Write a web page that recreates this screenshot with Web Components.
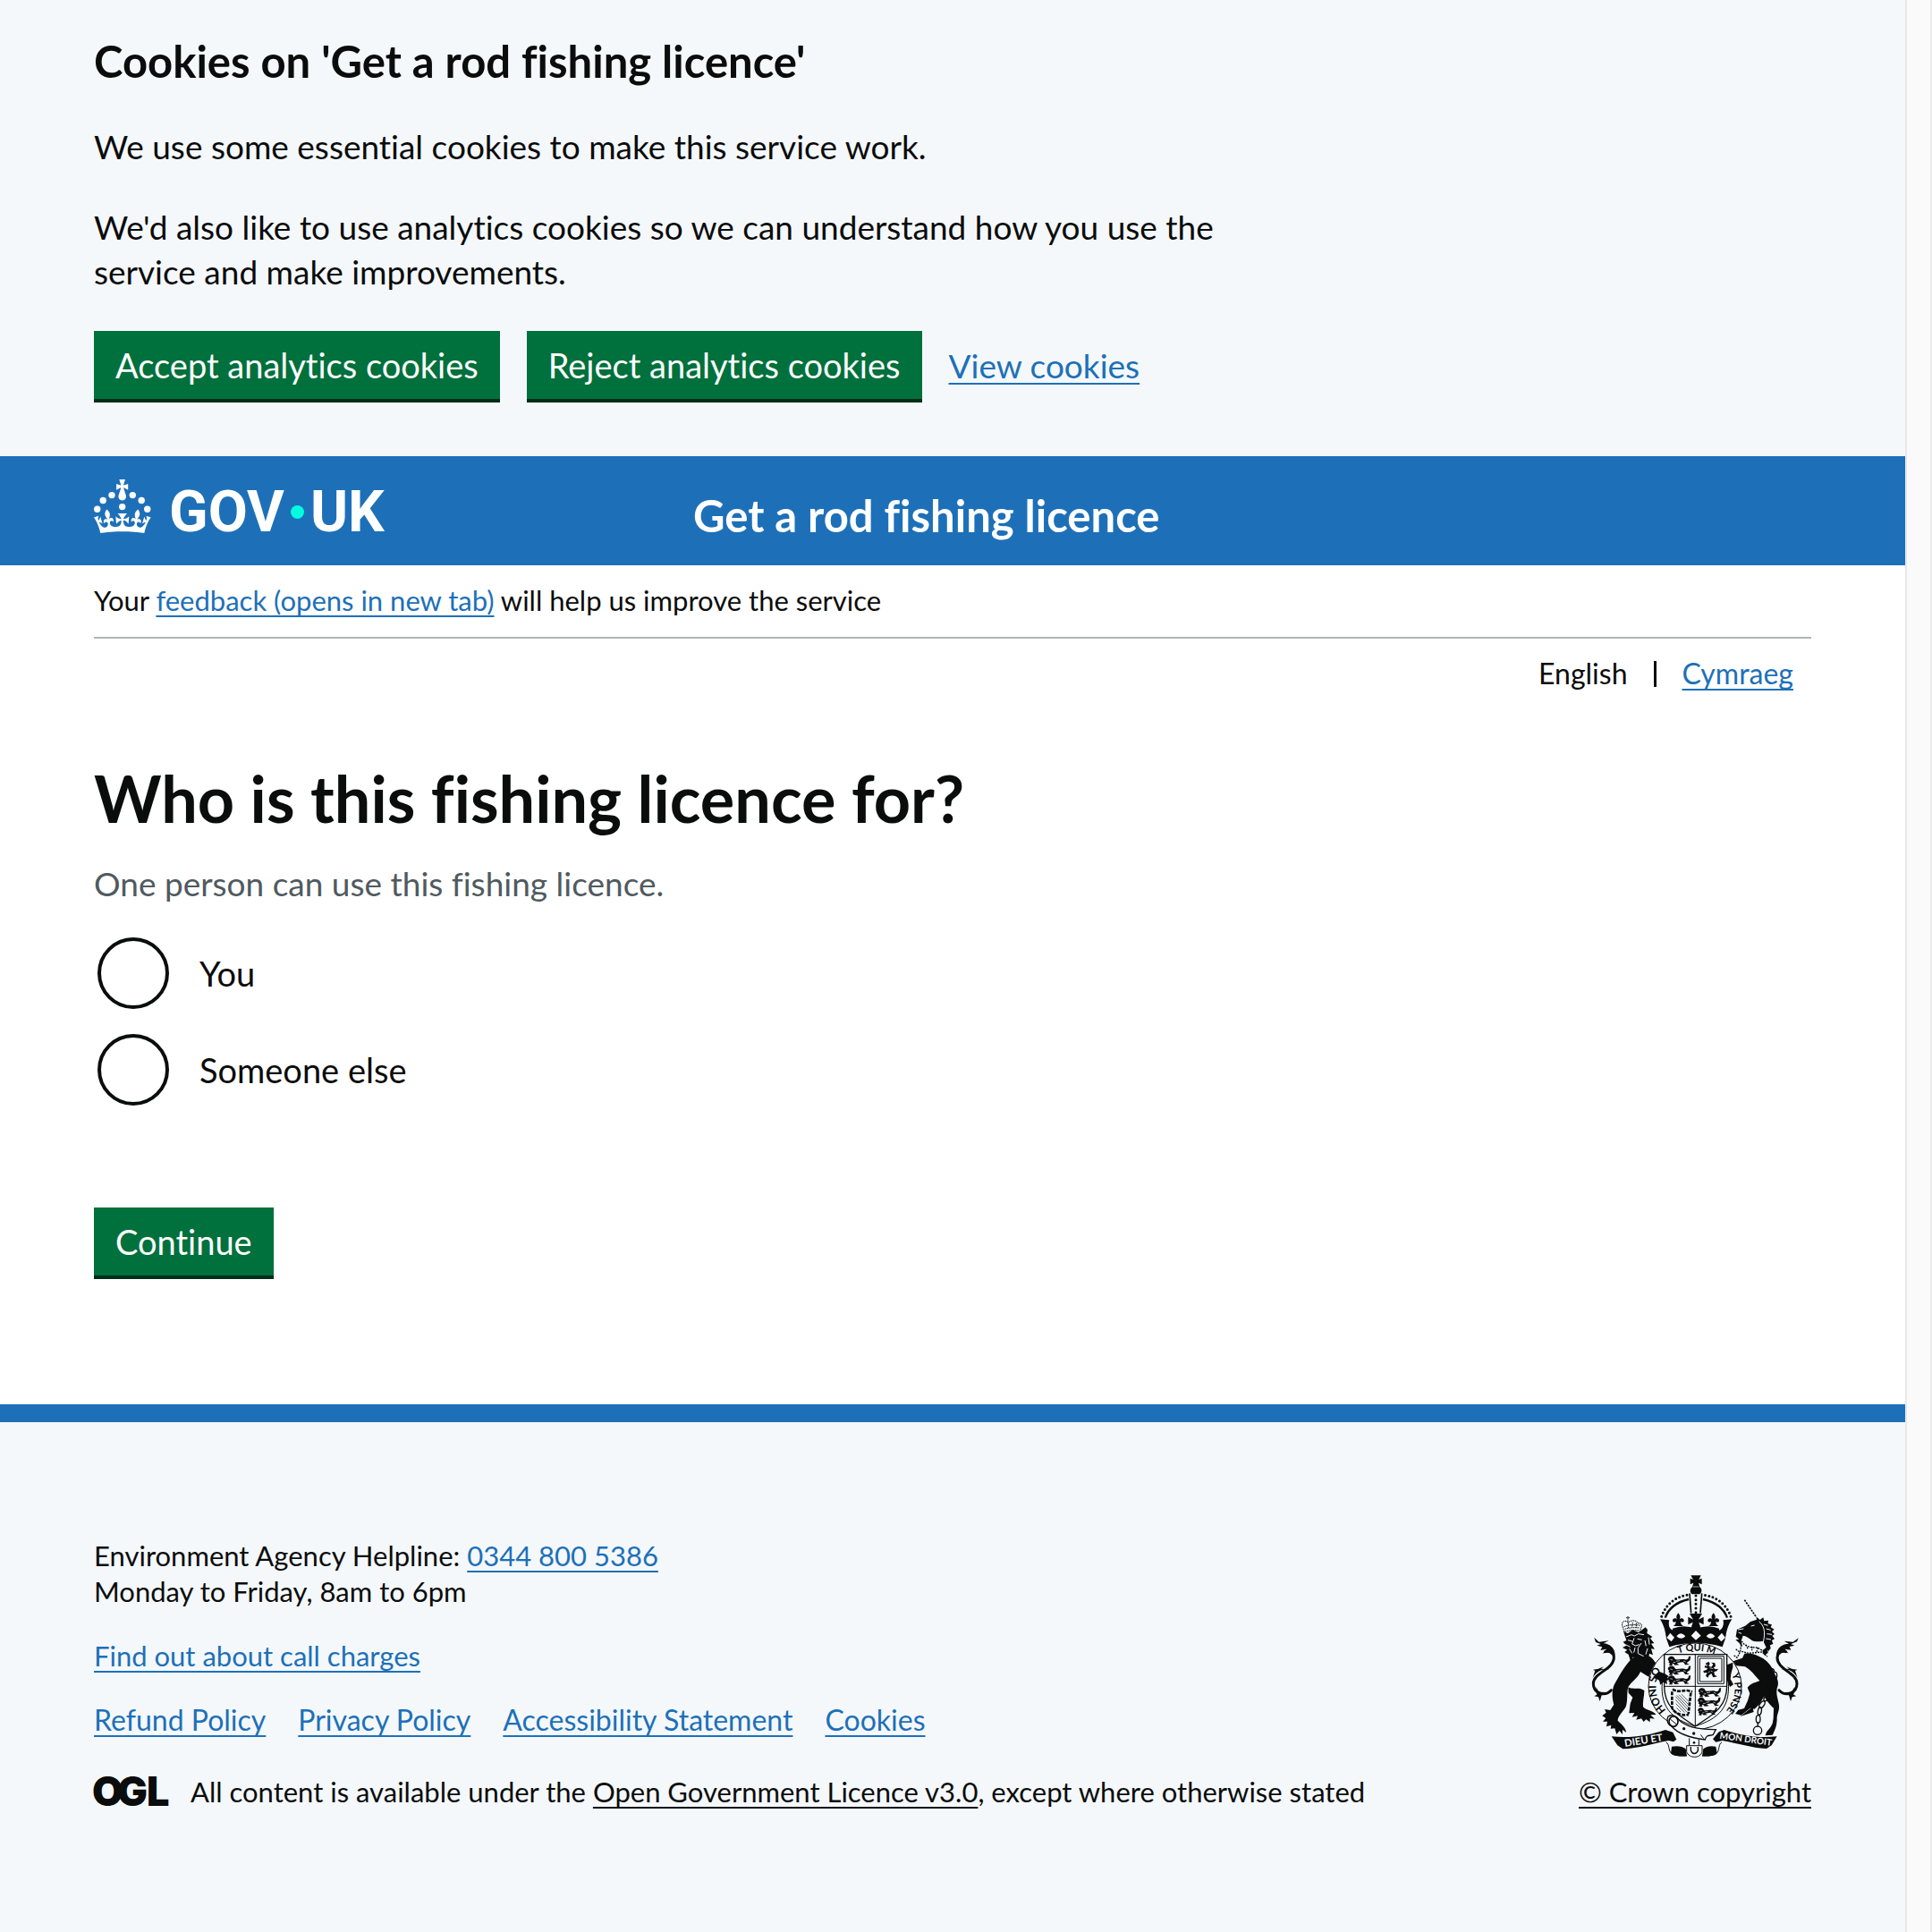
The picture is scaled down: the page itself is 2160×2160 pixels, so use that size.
<!DOCTYPE html>
<html lang="en">
<head>
<meta charset="utf-8">
<meta name="viewport" content="width=device-width, initial-scale=1">
<title>Who is this fishing licence for? - Get a rod fishing licence - GOV.UK</title>
<style>
html{background:#fff}
body{
  --ink:#0b0c0c;--blue:#1d70b8;--pale:#f4f8fb;--green:#00703c;--green-edge:#002d18;--grey:#b1b4b6;--hint:#505a5f;
  --gutter:105px;
  margin:0;color:var(--ink);
  font:37px/50px Lato,Roboto,"Liberation Sans",sans-serif;
  font-variant-ligatures:none;
}
</style>
</head>
<body>
<licence-page>
  <cookie-banner slot="banner">
    <span slot="heading">Cookies on 'Get a rod fishing licence'</span>
    <p>We use some essential cookies to make this service work.</p>
    <p>We'd also like to use analytics cookies so we can understand how you use the service and make improvements.</p>
    <action-button slot="actions">Accept analytics cookies</action-button>
    <action-button slot="actions">Reject analytics cookies</action-button>
    <text-link slot="actions">View cookies</text-link>
  </cookie-banner>
  <service-header slot="header">Get a rod fishing licence</service-header>
  <feedback-bar slot="phase"></feedback-bar>
  <language-switch slot="language"></language-switch>
  <licence-question slot="question"></licence-question>
  <service-footer slot="footer"></service-footer>
</licence-page>

<script>
const define = (name, html) => customElements.define(name, class extends HTMLElement {
  constructor() {
    super();
    this.attachShadow({ mode: 'open' }).innerHTML =
      '<style>:host{display:block}*{box-sizing:border-box}h1,h2,p,ul{margin:0;padding:0;font-weight:inherit}</style>' + html;
  }
});

define('text-link', `
<style>
:host{display:inline}
a{color:var(--link-colour,var(--blue));text-decoration:underline;text-decoration-thickness:2px;text-underline-offset:5px;text-decoration-skip-ink:none}
</style>
<a href="#"><slot></slot></a>`);

define('action-button', `
<style>
button{display:block;border:0;border-bottom:4px solid var(--green-edge);border-radius:0;margin:0;padding:13px 24px;
  background:var(--green);color:#fff;font:inherit;font-size:38px;line-height:50px;font-variant-ligatures:none;cursor:pointer}
</style>
<button type="button"><slot></slot></button>`);

define('licence-page', `
<style>
:host{display:grid;grid-template-columns:minmax(0,1fr) 30px;min-height:100vh}
.page{display:flex;flex-direction:column}
main{padding:0 var(--gutter)}
.rail{background:#fafafa;border-left:2px solid #e8e8e8;border-right:2px solid #ededed}
::slotted([slot=footer]){flex:1}
</style>
<div class="page">
  <slot name="banner"></slot>
  <slot name="header"></slot>
  <main><slot name="phase"></slot><slot name="language"></slot><slot name="question"></slot></main>
  <slot name="footer"></slot>
</div>
<div class="rail"></div>`);

define('cookie-banner', `
<style>
:host{background:var(--pale);padding:38px var(--gutter) 60px}
h2{font-size:49px;line-height:60px;font-weight:700}
.copy{display:flex;flex-direction:column;gap:40px;max-width:1280px;margin:41px 0}
::slotted(p){margin:0}
.actions{display:flex;flex-wrap:wrap;align-items:baseline;gap:30px}
</style>
<h2><slot name="heading"></slot></h2>
<div class="copy"><slot></slot></div>
<div class="actions"><slot name="actions"></slot></div>`);

define('gov-logo', `
<style>
:host{display:flex;align-items:flex-start;gap:19px;color:#fff;font:700 64px/74px Roboto,sans-serif}
svg{display:block;width:65px;height:60px;fill:currentColor}
.word{display:flex;gap:7px}
i{width:15px;height:15px;border-radius:50%;background:#00ffe0;margin-top:29px}
</style>
<svg viewBox="0 0 65 60" aria-hidden="true">
<circle cx="20" cy="17.6" r="3.7"/><circle cx="10.2" cy="23.5" r="3.7"/><circle cx="3.7" cy="33.2" r="3.7"/><circle cx="31.7" cy="30.6" r="3.7"/><circle cx="43.3" cy="17.6" r="3.7"/><circle cx="53.2" cy="23.5" r="3.7"/><circle cx="59.7" cy="33.2" r="3.7"/>
<path d="M33.1,9.8c.2-.1.3-.3.5-.5l4.6,2.4v-6.8l-4.6,1.5c-.1-.2-.3-.3-.5-.5l1.9-5.9h-6.7l1.9,5.9c-.2.1-.3.3-.5.5l-4.6-1.5v6.8l4.6-2.4c.1.2.3.3.5.5l-2.6,8c-.9,2.8,1.2,5.7,4.1,5.7h0c3,0,5.1-2.9,4.1-5.7l-2.6-8ZM37,37.9s-3.4,3.8-4.1,6.1c2.2,0,4.2-.5,6.4-2.8l-.7,8.5c-2-2.8-4.4-4.1-5.7-3.8.1,3.1.5,6.7,5.8,7.2,3.7.3,6.7-1.5,7-3.8.4-2.6-2-4.3-3.7-1.6-1.4-4.5,2.4-6.1,4.9-3.2-1.9-4.5-1.8-7.7,2.4-10.9,3,4,2.6,7.3-1.2,11.1,2.4-1.3,6.2,0,4,4.6-1.2-2.8-3.7-2.2-4.2.2-.3,1.7.7,3.7,3,4.2,1.9.3,4.7-.9,7-5.9-1.3,0-2.4.7-3.9,1.7l2.4-8c.6,2.3,1.4,3.7,2.2,4.5.6-1.6.5-2.8,0-5.3l5,1.8c-2.6,3.6-5.2,8.7-7.3,17.5-7.4-1.1-15.7-1.7-24.5-1.7h0c-8.8,0-17.1.6-24.5,1.7-2.1-8.9-4.7-13.9-7.3-17.5l5-1.8c-.5,2.5-.6,3.7,0,5.3.8-.8,1.6-2.3,2.2-4.5l2.4,8c-1.5-1-2.6-1.7-3.9-1.7,2.3,5,5.2,6.2,7,5.9,2.3-.4,3.3-2.4,3-4.2-.5-2.4-3-3.1-4.2-.2-2.2-4.6,1.6-6,4-4.6-3.7-3.7-4.2-7.1-1.2-11.1,4.2,3.2,4.3,6.4,2.4,10.9,2.5-2.8,6.3-1.3,4.9,3.2-1.8-2.7-4.1-1-3.7,1.6.3,2.3,3.3,4.1,7,3.8,5.4-.5,5.7-4.2,5.8-7.2-1.3-.2-3.7,1-5.7,3.8l-.7-8.5c2.2,2.3,4.2,2.7,6.4,2.8-.7-2.3-4.1-6.1-4.1-6.1h10.6,0Z"/>
</svg>
<span class="word"><span>GOV</span><i></i><span>UK</span></span>`);

define('service-header', `
<style>
:host{background:var(--blue);padding:26px var(--gutter) 22px}
header{display:grid;grid-template-columns:calc(33.333% + 30px) 1fr;align-items:start}
.title{padding-top:10px;font-size:49px;line-height:60px;font-weight:700;color:#fff}
</style>
<header><gov-logo></gov-logo><div class="title"><slot></slot></div></header>`);

define('feedback-bar', `
<style>
:host{font-size:31px;line-height:40px;padding:19px 0 21px;border-bottom:2px solid var(--grey)}
</style>
<p>Your <text-link>feedback (opens in new tab)</text-link> will help us improve the service</p>`);

define('language-switch', `
<style>
:host{font-size:32px;line-height:40px;padding:19px 20px 0}
nav{display:flex;justify-content:flex-end;align-items:center;gap:29px}
i{width:3px;height:29px;background:var(--ink)}
</style>
<nav><span>English</span><i></i><text-link>Cymraeg</text-link></nav>`);

define('radio-option', `
<style>
label{display:flex;align-items:center;gap:34px;padding:4px;font-size:38px;cursor:pointer}
input{appearance:none;width:80px;height:80px;margin:0;border:4px solid var(--ink);border-radius:50%;background:transparent}
input:checked{background:radial-gradient(var(--ink) 20px,transparent 21px)}
</style>
<label><input type="radio" name="who"><span><slot></slot></span></label>`);

define('licence-question', `
<style>
:host{padding:79px 0 140px}
h1{font-size:72px;line-height:80px;font-weight:700}
.hint{color:var(--hint);margin:31px 0}
.options{display:flex;flex-direction:column;gap:20px;margin-bottom:110px}
form{display:flex;flex-direction:column;align-items:flex-start}
</style>
<form>
<h1>Who is this fishing licence for?</h1>
<p class="hint">One person can use this fishing licence.</p>
<div class="options"><radio-option>You</radio-option><radio-option>Someone else</radio-option></div>
<action-button>Continue</action-button>
</form>`);

define('ogl-logo', `
<style>svg{display:block;width:82px;height:40px;overflow:visible}text{font:900 45px/40px Inter,sans-serif;fill:var(--ink)}</style>
<svg viewBox="0 0 82 40" aria-hidden="true"><text x="-2 26 59" y="36">OGL</text></svg>`);

define('royal-arms', `
<style>
svg{display:block;width:232px;height:204px}
text{font-family:Lato,sans-serif;font-weight:700}
.b{fill:#0b0c0c}.w{fill:#f4f8fb}
.l{fill:none;stroke:#0b0c0c}
.wl{fill:none;stroke:#f4f8fb}
.t{fill:none;stroke:#0b0c0c;stroke-width:9;stroke-linecap:round}
</style>
<svg viewBox="27 29 696 612" stroke-width="3" role="img" aria-label="Royal coat of arms">
<defs>
<g id="lionlet"><path class="b" d="M0 5c4-6 12-7 18-3 3 3 3 7 7 8 10 1 20-3 30 0 8 2 12-1 12-6 0-4 5-6 8-3-3 3 0 8-3 12-3 4-8 5-11 9l9 5-14 1c-3-4-4-9-9-9-8 0-12 3-19 3l8 6-15 1c-2-4-5-5-9-5l2 6-12 0 3-7c-5-2-6-5-2-8-5-2-6-7-3-10z"/><path class="wl" stroke-width="2" d="M6 10l8 2M26 16l12-2M50 15l8 3M16 20l8-1"/></g>
<path id="fleur" d="M0-27c7 8 8 15 4 22 5-7 15-5 15 3 0 6-7 8-11 3 0 8 3 12 9 16h-34c6-4 9-8 9-16-4 5-11 3-11-3 0-8 10-10 15-3-4-7-3-14 4-22z"/>
</defs>
<!-- lion supporter -->
<path class="t" d="M94 415C72 438 34 426 34 393C35 354 106 346 103 302C101 288 90 281 74 286"/>
<path class="b" d="M37 238l16 15 33-4-18 9c22 1 39 17 39 40l-13-3c-6-8-17-8-29-3l13-15-20 4 6-11-18-5 13-5-17-6zM88 345c-20-4-44 6-56 29l8-24-7-4 16-2 20-8-9 7zM43 404l10 17 26 1-17 10-6 20-5-14-14-3 9-5z"/>
<path class="b" d="M162 310C194 287 225 293 240 319C253 334 266 341 277 361L287 368L281 374L287 382L277 383L278 395L268 389L259 396L256 384L216 368L192 353C185 373 164 384 151 404C145 426 151 447 143 471C132 489 116 503 116 517C130 531 144 541 144 557L132 547L132 564L122 551L112 563L106 543L92 544L94 532L78 537L81 520L66 520L76 509L64 501L77 490L72 479L91 482L103 463C96 438 96 413 105 395C120 369 133 341 162 310z"/>
<path class="b" d="M151 405C168 415 189 402 205 416C205 436 199 454 201 471C213 484 231 481 245 497L226 498L240 511L224 509L224 522L211 513L203 521L195 510L178 514L183 501L164 505L172 491L154 492L158 460L166 439L152 424z"/>
<path class="b" d="M135 218l15 6 16-11 20 8 23-17 7 8-2 12 18 12-7 5 13 16-10 2 12 18-12-1 6 21-12-5-4 24-11-12-8 17-7-14-17 10-7-14-8 18-8-26-13-8 9-7-16-8 13-7-11-12 11-5z"/>
<path class="wl" d="M144 236l18-7 10 4 13-7 19 3M150 247l15 4M182 243l15 3M171 240l-7 20 12 6 12-4M142 262l16 8M195 257l-11 17v18l19 9M174 272l-4 17M155 276l9 15M207 248l4 19M219 238l3 24M216 275l-6 20"/>
<path class="l" stroke-dasharray="5 2" d="M138 219l-7-21c-2-16 11-19 20-10c9-9 31-9 32 3c9-3 15 3 13 10l-5 15c-17-4-35-2-53 3zM140 210c16-5 32-6 50-4M137 202c14-7 37-8 54-4M151 188v18M166 188l-2 16M178 189v16M150 185v-18M144 172h13"/>
<!-- unicorn supporter -->
<path class="t" d="M657 415C679 438 717 426 717 393C716 354 650 346 651 305C653 288 665 282 680 286"/>
<path class="b" d="M722 240l-18 13-30-3 16 9c-24 0-43 17-42 41l13-6c8-9 17-8 28-2l-12-15 20 3-5-11 17-4-12-5 20-8zM664 345c21-4 43 6 55 29l-8-24 7-4-17-2-19-8 9 7zM709 404l-10 17-26 1 17 10 6 20 5-14 14-3-9-5z"/>
<path class="b" d="M541 292c25-3 46 7 63 17c19 13 31 30 38 51c11 17 16 33 8 49c-4 22 5 39 7 57c2 16-7 30-7 43c0 22-4 35-15 56l-24 2c3-18 16-20 24-41l3-17 1-34c-15-14-33-33-38-57c-12 18-25 31-27 46l-44 35-20-5 10-13 20-5 12-26 7-24-8-20c12-16 30-17 41-23c-15-15-27-34-49-47l-36-4c-10 1-15 7-13 18l-4 31c7 4 15 14 10 22l-12-2-7-22 2-45 12-14 39-13z"/>
<path class="b" d="M531 500l37-29 4 17-45 15zM556 411c16-6 34-4 50-2l5 20-19 32-17 17-20-4 10-29z"/>
<path class="b" d="M516 211l28-12 16-13 22-8-2-10 13 11 11-8 3 12 14-2-1 11 13 3-4 9 12 7-8 7 9 9-8 5 8 11-9 5 4 12-10 4 2 12-10 5-3 13-9 3-7-19-24-11-22 4-23-3-8-12-12-10 12-2-11-9z"/>
<path class="wl" d="M519 212l19-3M563 200l12-3M590 185c17 13 22 34 14 69M606 194l14 4M614 209l15 4M616 226l17 2M613 242l17 3M521 221l10 4"/>
<path class="w" d="M536 232c14 2 22 10 30 16c12 6 24 4 38 2l10 22-16 12-62-4-6-30z"/>
<path class="l" stroke-width="5" stroke-dasharray="7 3" d="M541 112L580 169"/>
<path class="l" stroke-width="4" stroke-dasharray="6 3" d="M532 250c8 17 26 22 53 22l31 20 8-15M530 262l-3 22 28 7 45-4 18 16M512 277l14 11-10 18-12-9M546 262l6 14M566 268v14M586 272l-4 14"/>
<g class="l" stroke-width="4"><ellipse cx="630" cy="349" rx="7" ry="11" transform="rotate(-70 630 349)"/><ellipse cx="643" cy="366" rx="7" ry="12"/><ellipse cx="641" cy="389" rx="6" ry="12"/><ellipse cx="632" cy="412" rx="7" ry="13" transform="rotate(25 632 412)"/><ellipse cx="616" cy="440" rx="7" ry="13" transform="rotate(40 616 440)"/><ellipse cx="600" cy="463" rx="7" ry="13" transform="rotate(35 600 463)"/><ellipse cx="592" cy="485" rx="6" ry="13" transform="rotate(10 592 485)"/><ellipse cx="587" cy="512" rx="7" ry="13"/><circle cx="585" cy="550" r="14"/><path d="M586 522v14"/></g>
<!-- garter -->
<ellipse class="w" cx="375" cy="402" rx="157" ry="146"/>
<ellipse class="l" cx="375" cy="402" rx="156" ry="145"/>
<path class="l" d="M268 365C250 475 300 512 375 536C450 512 502 475 484 365"/>
<path id="gt" fill="none" d="M278 482A130 118 0 0 1 300 306"/>
<path id="gt2" fill="none" d="M320 292A150 130 0 0 1 450 300"/>
<path id="gt3" fill="none" d="M498 362A130 118 0 0 1 405 524"/>
<text font-size="35"><textPath href="#gt">HONI SO</textPath></text>
<text font-size="32"><textPath href="#gt2">T QUI M</textPath></text>
<text font-size="33"><textPath href="#gt3">Y PENSE</textPath></text>
<!-- shield -->
<path class="w" stroke="#0b0c0c" stroke-width="4" d="M272 295H482V402C482 475 430 500 376 536C322 500 272 475 272 402z"/>
<path class="l" d="M376 295V534M272 402H482"/>
<use href="#lionlet" x="286" y="302"/><use href="#lionlet" x="286" y="334"/><use href="#lionlet" x="286" y="366"/>
<use href="#lionlet" x="388" y="408"/><use href="#lionlet" x="386" y="440"/><use href="#lionlet" transform="translate(386 474) scale(.85)"/>
<path class="l" d="M384 301h88v92h-88zM391 308h74v78h-74z"/>
<path class="b" d="M410 326l11-7 4 7-4 8 9 3 6-8-6-7 12 2 2 10-7 6 7 5 9-2-5 8-9 2 2 11 9 5-14 3-6-13-9 7-2 7-8-6 5-11-11 1-2-7 11-3 3-6-10-2 2-7 8 3z"/>
<path class="wl" stroke-width="2" d="M414 328l4 4M424 340l12 3M428 350l6 3M419 356l6-4"/>
<path class="l" stroke-width="8" stroke-dasharray="12 4" d="M300 412c20 12 34 3 50 4l16 4M298 420v54c8 18 27 27 56 23M361 424l-8 70"/><path class="l" stroke-width="2" d="M310 436l42 46M310 447l38 42M314 432l38 40M321 430l32 33M329 428l26 26M311 460l29 30M313 474l14 14"/>
<path class="b" d="M254 352l20 8 13 8-5 5 7 7-9 3 2 12-13-7-10 9-4-15-20-12zM482 330l20-8v16l-6 22-2 18 10 18-12 8-9-22z"/>
<!-- buckle strap -->
<path class="w" stroke="#0b0c0c" stroke-width="4" d="M285 503c14-8 30-2 37 13c28 25 67 32 123 31l-9 17c-10 6-22-3-27 17c-48-6-90-18-112-45c-15-6-18-22-12-33z"/>
<ellipse class="l" cx="303" cy="520" rx="15" ry="17" stroke-width="5"/><path class="l" d="M292 512l22 18"/>
<circle class="b" cx="338" cy="544" r="5"/><circle class="b" cx="371" cy="560" r="5"/><path class="l" d="M404 577l-10-13"/>
<!-- motto scroll -->
<path class="b" d="M95 570c65 7 127-4 181-22l25 8 12 24-10 8-16-4c-55 10-100 26-154 28l-18-12zM650 570c-65 7-122-4-177-22l-18 7-20 24 10 10 22-5c55 10 95 24 148 27l17-11z"/>
<text font-size="34" fill="#f4f8fb" transform="translate(140 605) rotate(-9)">DIEU ET</text>
<text font-size="30" fill="#f4f8fb" transform="translate(457 577) rotate(8)">MON DROIT</text>
<path class="b" d="M297 604c16-3 37-2 47 8l4 24c-25 2-47 0-54-10zM445 604c-16-3-30-2-42 8l-4 24c25 2 43 0 50-10z"/>
<path class="l" d="M278 590c13 6 6 26 18 37 17 10 33 7 51 8M465 590c-13 6-6 26-18 37-17 10-31 7-48 8M356 576v25M388 580v20"/>
<path class="w" stroke="#0b0c0c" d="M347 601h52v20c-5 24-45 24-52 0z"/><path class="l" stroke-width="4" d="M361 605v12c5 14 19 14 24 0v-12"/><circle class="b" cx="372" cy="591" r="4"/>
<!-- crown -->
<path class="b" d="M361 30h34l-7 14 10-4v20l-11-5 4 14c10 8 6 19 0 24h-26c-8-7-8-16 1-24l4-14-11 5V40l10 4z"/><path class="wl" stroke-width="2" d="M368 68h20"/>
<path class="l" stroke-width="9" stroke-linecap="round" stroke-dasharray="0 13" d="M263 168C276 130 305 103 348 96M495 168C482 130 451 103 408 96"/>
<path class="l" stroke-width="7" d="M275 172C288 136 314 119 354 110M483 172C470 136 442 119 402 110"/>
<path class="l" stroke-width="5" d="M357 90l5 66M398 90l-5 66"/><path class="l" stroke-width="9" stroke-linecap="round" stroke-dasharray="0 14" d="M378 98v58"/>
<path class="b" d="M258 177l31 3c-6 20 4 34 16 35h148c12-1 20-15 16-35l30-3c-15 23-19 43-22 65l-10 28c-58-18-122-18-178 0l-10-28c-3-22-7-43-21-65z"/>
<path class="w" d="M289 181c20-10 60-10 78-3l20 0c20-8 60-6 82 3c3 18-5 29-13 31-22 7-138 7-156 0-11-5-14-17-11-31z"/>
<use class="b" href="#fleur" x="319" y="183"/><use class="b" href="#fleur" x="437" y="183"/>
<path class="b" d="M357 158h42l-12 20 17-9v26l-16-8 9 28h-38l9-28-16 8v-26l17 9zM300 208q40-16 78 2q40-18 78-2v12h-156z"/>
<path class="w" d="M280 239l12-16 14 15-10 14zM313 234q14-18 30 0q-14 15-30 0zM362 232l16-17 17 17-17 15zM413 234q14-18 29 0q-14 15-29 0zM451 238l14-15 12 16-14 13z"/>
</svg>`);

define('service-footer', `
<style>
:host{background:var(--pale);border-top:20px solid var(--blue);padding:129px var(--gutter) 0;font-size:31px;line-height:40px}
footer{display:flex;align-items:flex-end;justify-content:space-between;gap:40px}
.meta{display:flex;flex-direction:column;gap:32px}
ul{display:flex;flex-wrap:wrap;gap:36px;list-style:none;font-size:32px}
.ogl{display:flex;align-items:center;gap:26px;margin-top:8px;--link-colour:var(--ink)}
.crown{display:flex;flex-direction:column;align-items:center;gap:18px;--link-colour:var(--ink)}
</style>
<footer>
<div class="meta">
<p>Environment Agency Helpline: <text-link>0344 800 5386</text-link><br>Monday to Friday, 8am to 6pm</p>
<p><text-link>Find out about call charges</text-link></p>
<ul><li><text-link>Refund Policy</text-link></li><li><text-link>Privacy Policy</text-link></li><li><text-link>Accessibility Statement</text-link></li><li><text-link>Cookies</text-link></li></ul>
<div class="ogl"><ogl-logo></ogl-logo><p>All content is available under the <text-link>Open Government Licence v3.0</text-link>, except where otherwise stated</p></div>
</div>
<div class="crown"><royal-arms></royal-arms><text-link>© Crown copyright</text-link></div>
</footer>`);
</script>
</body>
</html>
